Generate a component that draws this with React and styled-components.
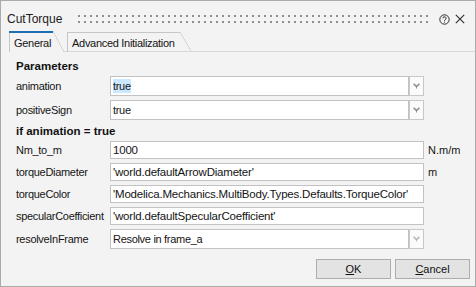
import React from 'react';
import styled, { createGlobalStyle, css } from 'styled-components';

const Global = createGlobalStyle`
  html, body { margin: 0; padding: 0; background: #f3f3f3; }
  body { font-family: "Liberation Sans", Arial, sans-serif; }
`;

const FONT = `"Liberation Sans", Arial, sans-serif`;

const Window = styled.div`
  box-sizing: border-box;
  width: 476px;
  height: 287px;
  border: 1px solid #ababab;
  background: #f3f3f3;
  display: flex;
  flex-direction: column;
  font-family: ${FONT};
  color: #141414;
  overflow: hidden;
`;

const TitleBar = styled.div`
  box-sizing: border-box;
  height: 30px;
  padding: 6px 10px 0 6px;
  display: flex;
  align-items: center;
`;

const Title = styled.span`
  font-size: 12px;
  line-height: 14px;
  color: #1b1b1b;
`;

const Grip = styled.div`
  flex: 1;
  height: 8px;
  margin: 0 11px 0 16px;
  background-image: linear-gradient(90deg, #8e8e8e 2px, transparent 2px),
    linear-gradient(90deg, #8e8e8e 2px, transparent 2px);
  background-size: 6px 2px;
  background-position: 0 0, 0 6px;
  background-repeat: repeat-x;
`;

const IconButton = styled.span`
  display: flex;
  align-items: center;
  margin-left: ${(p) => p.$gap || 0}px;
`;

const TabBar = styled.div`
  display: flex;
  align-items: flex-end;
  height: 21px;
  padding-left: 8px;
  background: linear-gradient(#d9d9d9, #d9d9d9) 8px 100% / calc(100% - 8px) 1px no-repeat;
`;

const Tab = styled.div`
  position: relative;
  box-sizing: border-box;
  display: flex;
  align-items: center;
  font-size: 11px;
  letter-spacing: -0.3px;
  border-left: 1px solid #c6c6c6;
  ${(p) =>
    p.$active
      ? css`
          height: 21px;
          background: #f3f3f3;
          padding: 2px 13px 0 4px;
        `
      : css`
          height: 20px;
          margin-left: 3px;
          padding: 1px 16px 0 4px;
        `}
  &::before {
    content: '';
    position: absolute;
    top: 0;
    left: -1px;
    right: 11px;
    height: ${(p) => (p.$active ? 2 : 1)}px;
    background: ${(p) => (p.$active ? '#1a6fb5' : '#c6c6c6')};
  }
  &::after {
    content: '';
    position: absolute;
    top: 0;
    right: 0;
    bottom: ${(p) => (p.$active ? 0 : 1)}px;
    width: 11px;
    background: linear-gradient(
      to top right,
      transparent calc(50% - 0.6px),
      #c6c6c6 50%,
      transparent calc(50% + 0.6px)
    );
  }
`;

const Pane = styled.div`
  display: flex;
  flex-direction: column;
  padding: 7px 0 0 15px;
`;

const Section = styled.div`
  font-size: 11.5px;
  font-weight: bold;
  line-height: 14px;
  height: 14px;
  color: #111;
  margin-top: ${(p) => p.$mt || 0}px;
`;

const Grid = styled.div`
  display: grid;
  grid-template-columns: 94px 314px auto;
  row-gap: 4px;
  align-items: center;
  margin-top: ${(p) => p.$mt || 0}px;
`;

const Label = styled.div`
  font-size: 11px;
  letter-spacing: -0.3px;
  color: #151515;
  white-space: nowrap;
`;

const Unit = styled.div`
  font-size: 11px;
  margin-left: 4px;
  color: #151515;
`;

const ComboBox = styled.div`
  display: flex;
  height: 20px;
`;

const ComboText = styled.div`
  flex: 1;
  box-sizing: border-box;
  border: 1px solid #c2c2c2;
  background: #fff;
  display: flex;
  align-items: center;
  padding-left: 2px;
  font-size: 11px;
  letter-spacing: -0.3px;
`;

const Selected = styled.span`
  background: #cce8ff;
  padding: 1px 0;
`;

const ComboButton = styled.div`
  width: 15px;
  box-sizing: border-box;
  border: 1px solid #c8c8c8;
  background: #fbfbfb;
  display: flex;
  align-items: center;
  justify-content: center;
`;

const Edit = styled.div`
  box-sizing: border-box;
  height: 18px;
  border: 1px solid #c2c2c2;
  background: #fff;
  display: flex;
  align-items: center;
  padding-left: 2px;
  font-size: 11.5px;
  letter-spacing: -0.2px;
  white-space: nowrap;
  overflow: hidden;
`;

const ButtonRow = styled.div`
  display: flex;
  justify-content: flex-end;
  gap: 4px;
  margin-top: 10px;
  padding-right: 5px;
`;

const Button = styled.button`
  width: 75px;
  height: 20px;
  box-sizing: border-box;
  border: 1px solid #adadad;
  background: #e3e3e3;
  font-family: ${FONT};
  font-size: 11px;
  color: #111;
  padding: 0;
  display: flex;
  align-items: center;
  justify-content: center;
`;

const Arrow = ({ light }) => (
  <svg width="7" height="6" viewBox="0 0 7 6">
    <path d="M0.6 0.8 L3.5 3.6 L6.4 0.8" fill="none" stroke={light ? '#b5b5b5' : '#8c8c8c'} strokeWidth="1.5" />
    <rect x="3" y="3" width="1" height="2.5" fill={light ? '#b5b5b5' : '#8c8c8c'} />
  </svg>
);

const Combo = ({ value, selected, light }) => (
  <ComboBox>
    <ComboText>{selected ? <Selected>{value}</Selected> : value}</ComboText>
    <ComboButton>
      <Arrow light={light} />
    </ComboButton>
  </ComboBox>
);

const HelpIcon = () => (
  <svg width="11" height="11" viewBox="0 0 11 11">
    <circle cx="5.5" cy="5.5" r="4.7" fill="none" stroke="#2d2d2d" strokeWidth="1" />
    <path d="M3.9 4.3 a1.6 1.5 0 1 1 2.3 1.3 c-0.5 0.3 -0.7 0.5 -0.7 1.1" fill="none" stroke="#2d2d2d" strokeWidth="1" />
    <rect x="5" y="7.6" width="1" height="1" fill="#2d2d2d" />
  </svg>
);

const CloseIcon = () => (
  <svg width="10" height="10" viewBox="0 0 10 10">
    <path d="M0.8 0.8 L9.2 9.2 M9.2 0.8 L0.8 9.2" stroke="#2d2d2d" strokeWidth="1.1" />
  </svg>
);

export default function App() {
  return (
    <>
      <Global />
      <Window>
        <TitleBar>
          <Title>CutTorque</Title>
          <Grip />
          <IconButton>
            <HelpIcon />
          </IconButton>
          <IconButton $gap={5}>
            <CloseIcon />
          </IconButton>
        </TitleBar>
        <TabBar>
          <Tab $active>General</Tab>
          <Tab>Advanced Initialization</Tab>
        </TabBar>
        <Pane>
          <Section>Parameters</Section>
          <Grid $mt={3}>
            <Label>animation</Label>
            <Combo value="true" selected />
            <span />
            <Label>positiveSign</Label>
            <Combo value="true" />
            <span />
          </Grid>
          <Section $mt={4}>if animation = true</Section>
          <Grid $mt={3}>
            <Label>Nm_to_m</Label>
            <Edit>1000</Edit>
            <Unit>N.m/m</Unit>
            <Label>torqueDiameter</Label>
            <Edit>'world.defaultArrowDiameter'</Edit>
            <Unit>m</Unit>
            <Label>torqueColor</Label>
            <Edit>'Modelica.Mechanics.MultiBody.Types.Defaults.TorqueColor'</Edit>
            <span />
            <Label>specularCoefficient</Label>
            <Edit>'world.defaultSpecularCoefficient'</Edit>
            <span />
            <Label>resolveInFrame</Label>
            <Combo value="Resolve in frame_a" light />
            <span />
          </Grid>
        </Pane>
        <ButtonRow>
          <Button>
            <u>O</u>K
          </Button>
          <Button>
            <u>C</u>ancel
          </Button>
        </ButtonRow>
      </Window>
    </>
  );
}
